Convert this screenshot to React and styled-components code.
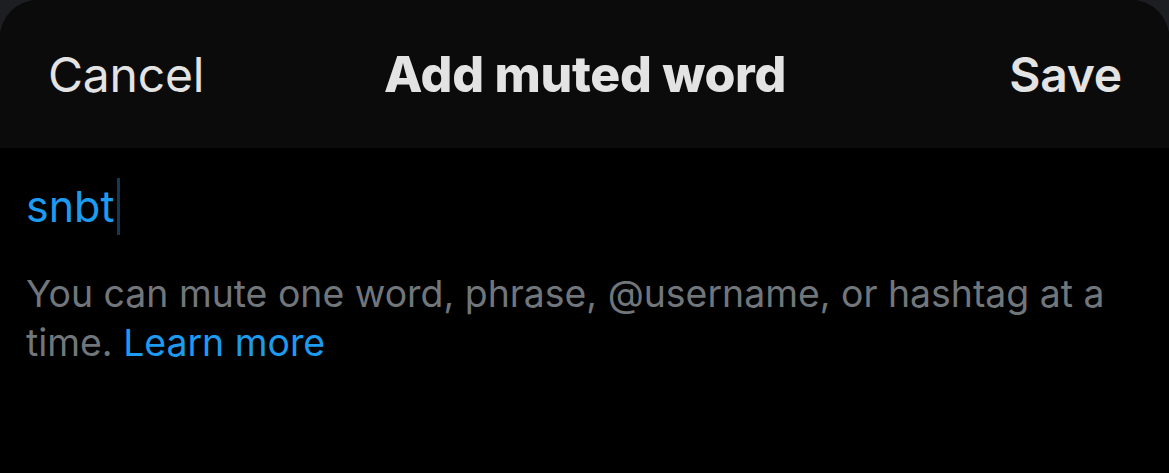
import React from 'react';
import styled, { createGlobalStyle } from 'styled-components';

const Global = createGlobalStyle`
  html, body {
    margin: 0;
    padding: 0;
    background: #1d1e21;
  }
  body {
    font-family: Inter, "Noto Sans", sans-serif;
    -webkit-font-smoothing: antialiased;
  }
`;

const Sheet = styled.div`
  width: 1169px;
  height: 473px;
  background: #000;
  border-radius: 38px 38px 0 0;
  overflow: hidden;
`;

const Header = styled.header`
  height: 148px;
  background: #0b0b0b;
  display: grid;
  grid-template-columns: 1fr auto 1fr;
  align-items: center;
  padding: 0 47px 0 48px;
  box-sizing: border-box;
`;

const Action = styled.button`
  background: none;
  border: 0;
  padding: 0;
  font-family: inherit;
  font-size: 48px;
  font-weight: ${p => (p.$bold ? 600 : 400)};
  color: #e3e3e3;
  justify-self: ${p => p.$align};
  letter-spacing: -0.2px;
`;

const Title = styled.h1`
  margin: 0;
  font-size: 50px;
  font-weight: 800;
  color: #e3e3e3;
  letter-spacing: -0.3px;
`;

const Body = styled.div`
  padding: 28px 26px 0 26px;
`;

const Field = styled.div`
  display: flex;
  align-items: center;
  height: 60px;
  font-size: 43px;
  color: #1d9bf0;
`;

const Caret = styled.span`
  width: 3px;
  height: 57px;
  margin-left: 2px;
  background: #123a55;
`;

const Hint = styled.p`
  margin: 33px 0 0;
  font-size: 37.4px;
  line-height: 49px;
  color: #71767b;
`;

const Link = styled.span`
  color: #1d9bf0;
`;

export default function App() {
  return (
    <>
      <Global />
      <Sheet>
        <Header>
          <Action $align="start">Cancel</Action>
          <Title>Add muted word</Title>
          <Action $align="end" $bold>Save</Action>
        </Header>
        <Body>
          <Field>
            snbt
            <Caret />
          </Field>
          <Hint>
            You can mute one word, phrase, @username, or hashtag at a time. <Link>Learn more</Link>
          </Hint>
        </Body>
      </Sheet>
    </>
  );
}
